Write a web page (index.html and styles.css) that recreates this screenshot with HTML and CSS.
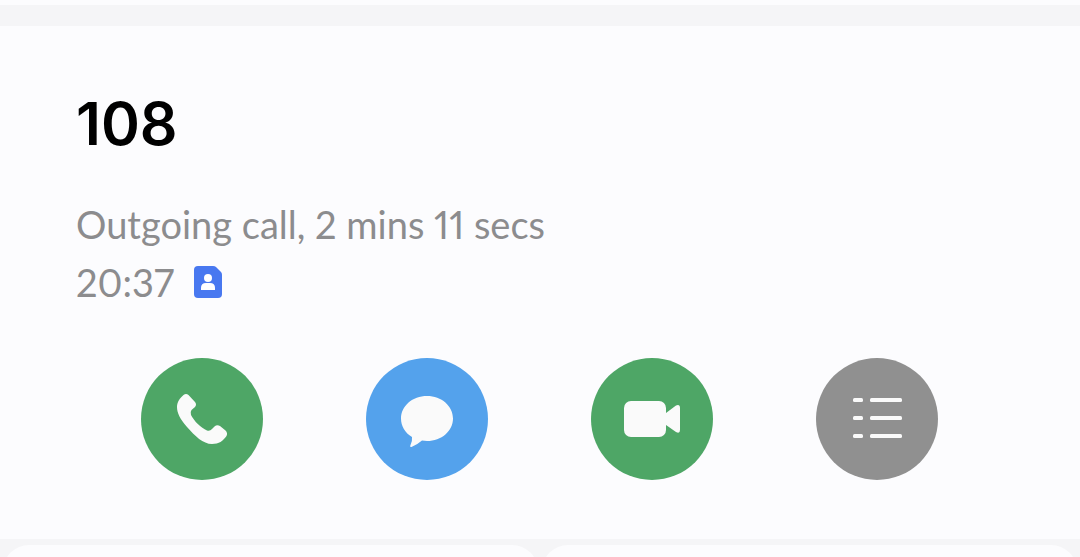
FILE: index.html
```html
<!DOCTYPE html>
<html lang="en">
<head>
    <meta charset="UTF-8">
    <meta name="viewport" content="width=device-width, initial-scale=1.0">
    <title>108</title>
    <link rel="stylesheet" href="styles.css">
</head>
<body>
    <div class="previous"></div>
    <main class="entry">
        <h1 class="number">108</h1>
        <p class="detail">Outgoing call, 2 mins 11 secs</p>
        <p class="detail time">
            <span>20:37</span>
            <svg class="sim" viewBox="0 0 28 32" aria-hidden="true">
                <path fill="#4878f0" d="M4 0H19Q21 0 22 1L27 6Q28 7 28 9V28Q28 32 24 32H4Q0 32 0 28V4Q0 0 4 0Z"/>
                <circle cx="14" cy="12" r="4" fill="#fff"/>
                <path fill="#fff" d="M7 24V22Q7 17 12 17H16Q21 17 21 22V24Z"/>
            </svg>
        </p>
        <div class="actions">
            <button class="action green" type="button" aria-label="Call">
                <svg viewBox="0 0 122 122">
                    <path d="M42.500 37Q45 35 47.500 37L54 44Q56 46.500 54 49L50.500 52Q49 54 50 57C53 63 60 70 66 72.500Q69 73.500 71 71L73.500 68.500Q76 66.500 79 68L84.500 72.500Q87 75 85.500 78C82 83 78 86 71 86C62 86 54 78 46 69C39 61 36 55 36 49C36 44 39 40 42.500 37Z"/>
                </svg>
            </button>
            <button class="action blue" type="button" aria-label="Message">
                <svg viewBox="0 0 122 122">
                    <path d="M61 38C75.500 38 87 48 87 60.500S75.500 83 61 83Q58.500 83 56 82.600Q51 87 45.500 89Q43.500 89 44.500 87Q46.500 83 46 79C39 75 35 68 35 60.500C35 48 46.500 38 61 38Z"/>
                </svg>
            </button>
            <button class="action green" type="button" aria-label="Video call">
                <svg viewBox="0 0 122 122">
                    <rect x="33" y="43" width="42" height="36" rx="7"/>
                    <path d="M75 55L85 47.500Q89 46 89 50V72Q89 76 85 74L75 67Z"/>
                </svg>
            </button>
            <button class="action gray" type="button" aria-label="Call history">
                <svg viewBox="0 0 122 122">
                    <rect x="37" y="40" width="10" height="4" rx="1.500"/>
                    <rect x="54" y="40" width="32" height="4" rx="1.500"/>
                    <rect x="37" y="58" width="10" height="4" rx="1.500"/>
                    <rect x="54" y="58" width="32" height="4" rx="1.500"/>
                    <rect x="37" y="76" width="10" height="4" rx="1.500"/>
                    <rect x="54" y="76" width="32" height="4" rx="1.500"/>
                </svg>
            </button>
        </div>
    </main>
    <div class="cards">
        <div class="card"></div>
        <div class="card"></div>
    </div>
</body>
</html>
```
FILE: styles.css
```css
* {
    box-sizing: border-box;
}

body {
    margin: 0;
    height: 100vh;
    display: flex;
    flex-direction: column;
    background-color: #f5f5f7;
    font-family: Lato, sans-serif;
}

.previous {
    flex-shrink: 0;
    height: 5px;
    margin-bottom: 21px;
    background-color: #fcfcfe;
}

.entry {
    flex-shrink: 0;
    padding: 64px 77px 59px 76px;
    background-color: #fcfcfe;
}

.number {
    margin: 0 0 37px;
    font-family: Inter, sans-serif;
    font-size: 59px;
    font-weight: 600;
    line-height: 68px;
    color: #000;
}

.detail {
    margin: 0;
    font-size: 38px;
    line-height: 58px;
    font-variant-numeric: proportional-nums;
    color: #8c8c8e;
}

.time {
    display: flex;
    align-items: center;
    gap: 20px;
}

.sim {
    width: 28px;
    height: 32px;
}

.actions {
    display: grid;
    grid-template-columns: repeat(4, 1fr);
    justify-items: center;
    margin: 47px 14px 0 13px;
}

.action {
    width: 122px;
    height: 122px;
    padding: 0;
    border: none;
    border-radius: 50%;
    cursor: pointer;
}

.action svg {
    display: block;
    fill: #fafafa;
}

.green {
    background-color: #4ea666;
}

.blue {
    background-color: #54a2ec;
}

.gray {
    background-color: #909090;
}

.cards {
    flex: 1;
    min-height: 0;
    display: flex;
    align-items: flex-start;
    gap: 4px;
    padding: 6px 3px 0;
    overflow: hidden;
}

.card {
    flex: 1;
    height: 160px;
    border-radius: 26px;
    background-color: #fcfcfe;
}
```
